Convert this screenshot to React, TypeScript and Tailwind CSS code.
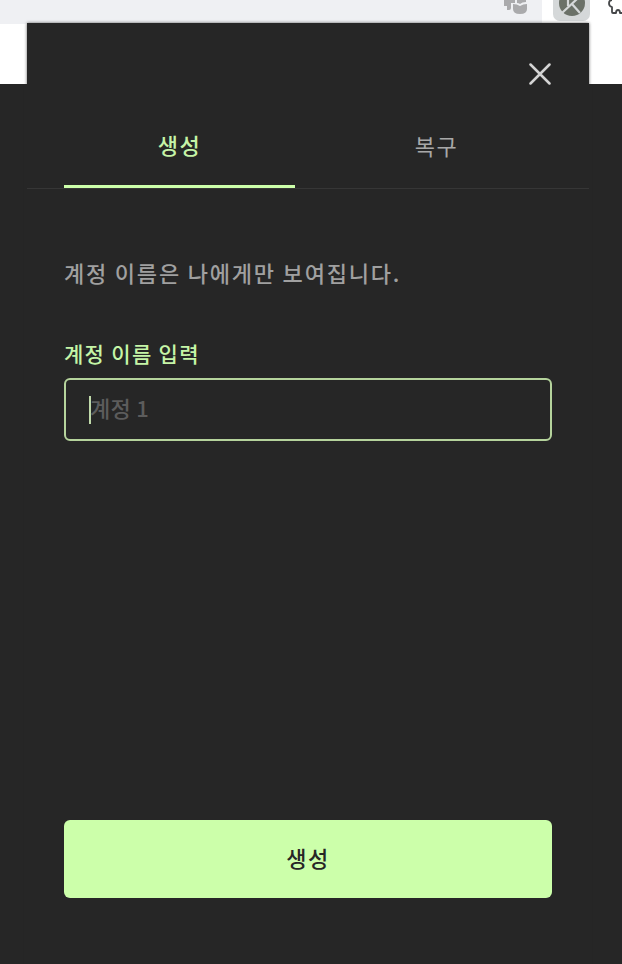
const font = "font-['Noto_Sans_CJK_KR','Noto_Sans',sans-serif]";

function Toolbar() {
  return (
    <div className="flex h-6 items-start overflow-hidden bg-white">
      <div className="flex h-6 w-[542px] justify-end bg-[#eff0f3] pr-[14px]">
        <svg width="26" height="16" viewBox="0 0 26 16" fill="#aaaaac">
          <path d="M2 0h11v3H9v5q0 2-2 2H5V6H2z" />
          <path d="M11 4q4 0 7 2 3-2 7-2v5q0 5-7 5t-7-5z" />
          <path d="M15 0h9v2q-4 0-6 2-1-1-3-1z" />
        </svg>
      </div>
      <div className="ml-[11px] flex h-[21px] w-[37px] justify-center rounded-b-[7px] bg-[#d5d8d9]">
        <svg width="28" height="17" viewBox="0 0 28 17">
          <circle cx="14" cy="3" r="13" fill="#6b7168" />
          <path d="M4 13 19-1M10 0v6M14 4l8 9" stroke="#d5d8d9" strokeWidth="2.200" fill="none" />
        </svg>
      </div>
      <svg className="ml-[17px]" width="15" height="16" viewBox="0 0 15 16" fill="none" stroke="#454749" strokeWidth="1.800" strokeLinejoin="round">
        <path d="M5 0C1 0 1 6 5 7v5q0 1 1 1h3c0-4 4-4 4 0h2" />
      </svg>
    </div>
  );
}

export default function App() {
  return (
    <div className={`relative h-[964px] w-[622px] overflow-hidden bg-[#262626] ${font}`}>
      <Toolbar />
      <div className="h-[60px] bg-white" />
      <main className="absolute left-[27px] top-[23px] flex h-[941px] w-[562px] flex-col bg-[#262626] shadow-[0_0_3px_rgba(0,0,0,0.6)]">
        <div className="flex h-[82px] justify-end pr-[38px] pt-10">
          <button aria-label="닫기" className="h-[22px] w-[22px]">
            <svg width="22" height="22" viewBox="0 0 22 22" stroke="#d4d4d4" strokeWidth="2.500" strokeLinecap="round">
              <path d="M1.500 1.500 20.500 20.500M20.500 1.500 1.500 20.500" />
            </svg>
          </button>
        </div>
        <nav className="flex h-[84px] border-b border-[#363636] px-[37px] text-[22px] leading-[32px] tracking-[1.500px]">
          <button className="-mb-px h-[83px] w-[231px] shrink-0 border-b-[3px] border-[#ccffaa] pb-[3px] font-medium text-[#c5f3a7]">생성</button>
          <button className="ml-[26px] h-[79px] w-[231px] shrink-0 text-[#a8a8a8]">복구</button>
        </nav>
        <section className="flex flex-1 flex-col px-[37px]">
          <p className="mt-[67px] h-8 whitespace-nowrap text-[22px] font-medium leading-8 tracking-[1.800px] text-[#a0a0a0]">계정 이름은 나에게만 보여집니다.</p>
          <label className="mt-[51px] h-7 whitespace-nowrap text-[21px] font-medium leading-7 tracking-[1.300px] text-[#c5f5a6]">계정 이름 입력</label>
          <div className="mt-[11px] flex h-[63px] w-[488px] items-center rounded-[6px] border-2 border-[#b5d39c] pl-[23px]">
            <div className="h-[28px] w-[2px] bg-[#c0d9aa]" />
            <span className="-ml-px pb-[5px] text-[22px] font-medium leading-8 tracking-[0.300px] text-[#5c5c5c]">계정 1</span>
          </div>
          <button className="mb-[66px] mt-auto h-[78px] w-[488px] rounded-[6px] bg-[#ccffaa] pb-1 text-[22px] font-medium tracking-[1.500px] text-[#262626]">생성</button>
        </section>
      </main>
      <div className="absolute left-[24px] top-[84px] h-[880px] w-[3px] bg-[#262626]" />
      <div className="absolute left-[589px] top-[84px] h-[880px] w-[3px] bg-[#262626]" />
    </div>
  );
}
